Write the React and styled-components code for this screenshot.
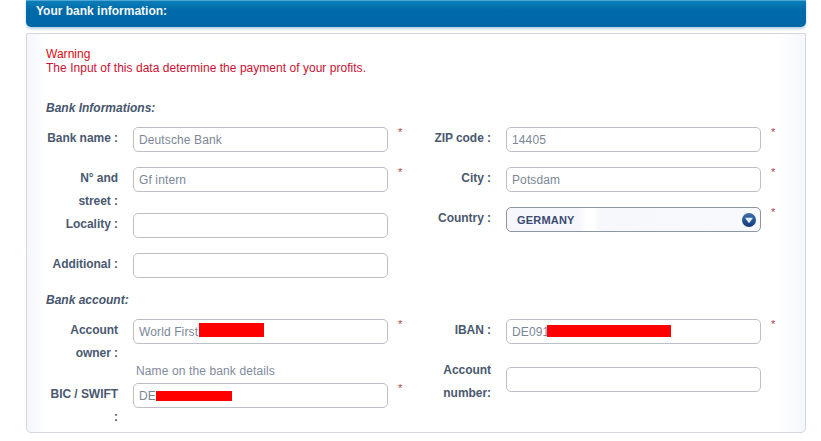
import React from "react";
import styled, { createGlobalStyle } from "styled-components";

const Global = createGlobalStyle`
  html, body { margin: 0; padding: 0; background: #fff; }
  body { font-family: "Liberation Sans", Arial, sans-serif; font-size: 12px; }
`;

const Page = styled.div`
  width: 821px;
  height: 441px;
  padding: 0 15px 0 26px;
  box-sizing: border-box;
  overflow: hidden;
`;

const Header = styled.div`
  height: 27px;
  box-sizing: border-box;
  padding: 3px 0 0 10px;
  border-top: 1px solid #4fa6d2;
  border-radius: 0 0 5px 5px;
  background: linear-gradient(180deg, #0a7fb9 0%, #0069a8 35%, #0068a5 100%);
  box-shadow: 0 2px 3px rgba(120, 170, 215, 0.55);
  color: #f2f8fc;
  font-weight: bold;
  font-size: 12px;
  line-height: 14px;
`;

const Panel = styled.div`
  margin-top: 6px;
  height: 400px;
  box-sizing: border-box;
  padding: 13px 0 0 19px;
  border: 1px solid #d4d8dd;
  border-radius: 0 0 5px 5px;
  background: linear-gradient(90deg, #f4f7fb 0, #fff 20px, #fff calc(100% - 28px), #f4f7fb 100%);
`;

const Warning = styled.div`
  color: #cc1133;
  font-size: 12px;
  line-height: 14px;
  letter-spacing: 0.03px;
  height: 54px;
`;

const WarningTitle = styled.div`
  color: #e00a12;
`;

const SectionTitle = styled.div`
  color: #47566e;
  font-style: italic;
  font-weight: bold;
  font-size: 12px;
  line-height: 14px;
  height: ${(p) => p.$height}px;
`;

const Columns = styled.div`
  display: grid;
  grid-template-columns: 373px 1fr;
`;

const Column = styled.div`
  display: flex;
  flex-direction: column;
`;

const Field = styled.div`
  display: flex;
  align-items: flex-start;
  min-height: 40px;
`;

const Label = styled.div`
  width: 72px;
  flex: none;
  margin-right: 15px;
  text-align: right;
  color: #4a5970;
  font-weight: bold;
  font-size: 12px;
  line-height: 23px;
  letter-spacing: -0.05px;
`;

const InputWrap = styled.div`
  position: relative;
  width: 255px;
  height: 25px;
  flex: none;
  margin-top: ${(p) => p.$offset || 0}px;
`;

const TextInput = styled.input`
  width: 100%;
  height: 100%;
  box-sizing: border-box;
  padding: 1px 5px 0;
  border: 1px solid #bcc0c6;
  border-radius: 5px;
  background: #fff;
  color: #7b8798;
  font-family: "Liberation Sans", Arial, sans-serif;
  font-size: 12px;
  letter-spacing: 0.12px;
  outline: none;
`;

const Redaction = styled.div`
  position: absolute;
  left: ${(p) => p.$left}px;
  top: ${(p) => p.$top}px;
  width: ${(p) => p.$width}px;
  height: ${(p) => p.$height}px;
  background: #ff0000;
`;

const Star = styled.span`
  margin: 0 0 0 10px;
  color: #b5404f;
  font-size: 11px;
  line-height: 11px;
`;

const SelectBox = styled.div`
  display: flex;
  align-items: center;
  justify-content: space-between;
  width: 255px;
  height: 25px;
  flex: none;
  box-sizing: border-box;
  padding: 0 4px 0 10px;
  border: 1px solid #8e96a4;
  border-radius: 5px;
  background: linear-gradient(90deg, #f5f7fc 0, #f5f7fc 72px, #fff 80px, #fff 86px, #f6f8fc 92px, #f8f9fd 100%);
  color: #3d4a70;
  font-weight: bold;
  font-size: 11px;
  letter-spacing: 0.2px;
`;

const Help = styled.div`
  height: 18px;
  padding-left: 90px;
  color: #808a9e;
  font-size: 12px;
  line-height: 12px;
  letter-spacing: 0.12px;
`;

const Row = ({ label, value, required, offset, children }) => (
  <Field>
    <Label>{label}</Label>
    <InputWrap $offset={offset}>
      <TextInput defaultValue={value} />
      {children}
    </InputWrap>
    {required && <Star>*</Star>}
  </Field>
);

const Chevron = () => (
  <svg width="14" height="14" viewBox="0 0 14 14">
    <defs>
      <linearGradient id="knob" x1="0" y1="0" x2="0" y2="1">
        <stop offset="0" stopColor="#3f70ae" />
        <stop offset="1" stopColor="#123a78" />
      </linearGradient>
    </defs>
    <circle cx="7" cy="7" r="7" fill="url(#knob)" />
    <path d="M3 4.8h8L7.6 9.6a.8.8 0 0 1-1.2 0z" fill="#dff0fb" />
  </svg>
);

export default function App() {
  return (
    <Page>
      <Global />
      <Header>Your bank information:</Header>
      <Panel>
        <Warning>
          <WarningTitle>Warning</WarningTitle>
          The Input of this data determine the payment of your profits.
        </Warning>
        <SectionTitle $height={26}>Bank Informations:</SectionTitle>
        <Columns>
          <Column>
            <Row label="Bank name :" value="Deutsche Bank" required />
            <Row label="N° and street :" value="Gf intern" required />
            <Row label="Locality :" />
            <Row label="Additional :" />
          </Column>
          <Column>
            <Row label="ZIP code :" value="14405" required />
            <Row label="City :" value="Potsdam" required />
            <Field>
              <Label>Country :</Label>
              <SelectBox>
                GERMANY
                <Chevron />
              </SelectBox>
              <Star>*</Star>
            </Field>
          </Column>
        </Columns>
        <SectionTitle $height={26}>Bank account:</SectionTitle>
        <Columns>
          <Column>
            <Row label="Account owner :" value="World First" required>
              <Redaction $left={66} $top={4} $width={65} $height={14} />
            </Row>
            <Help>Name on the bank details</Help>
            <Row label="BIC / SWIFT :" value="DE" required>
              <Redaction $left={23} $top={8} $width={76} $height={10} />
            </Row>
          </Column>
          <Column>
            <Row label="IBAN :" value="DE091" required>
              <Redaction $left={41} $top={6} $width={124} $height={12} />
            </Row>
            <Row label="Account number:" offset={8} />
          </Column>
        </Columns>
      </Panel>
    </Page>
  );
}
